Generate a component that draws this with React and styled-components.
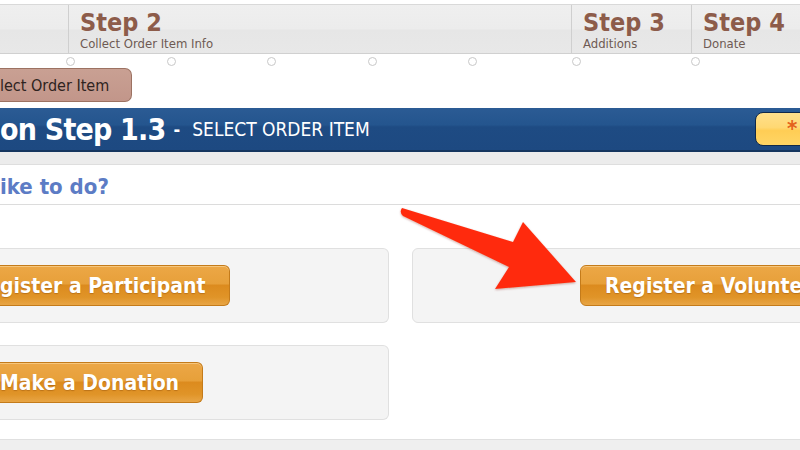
import React from 'react';
import styled, { createGlobalStyle } from 'styled-components';

const Global = createGlobalStyle`
  html, body {
    margin: 0;
    padding: 0;
    background: #fff;
  }
  body {
    font-family: "DejaVu Sans Condensed", "DejaVu Sans", sans-serif;
  }
`;

const Page = styled.div`
  position: relative;
  width: 800px;
  height: 450px;
  overflow: hidden;
  padding-top: 4px;
  box-sizing: border-box;
`;

const COLS = '68px 503px 120px 1fr';

const StepBar = styled.div`
  display: grid;
  grid-template-columns: ${COLS};
  height: 50px;
  box-sizing: border-box;
  border-top: 1px solid #d9d9d9;
  border-bottom: 1px solid #d0d0d0;
  background: linear-gradient(#efefef 0%, #ececec 50%, #e6e6e6 52%, #e8e8e8 100%);
`;

const StepCell = styled.div`
  border-left: ${(p) => (p.first ? 'none' : '1px solid #cfcfcf')};
  padding: 4px 0 0 11px;
`;

const StepTitle = styled.div`
  font-size: 25px;
  line-height: 28px;
  font-weight: bold;
  color: #8d5c4a;
`;

const StepSub = styled.div`
  font-size: 13px;
  line-height: 14px;
  color: #6e5a53;
`;

const DotRow = styled.div`
  display: grid;
  grid-template-columns: ${COLS};
  height: 14px;
  align-items: center;
`;

const DotGroup = styled.div`
  display: grid;
  grid-template-columns: repeat(${(p) => p.count}, 1fr);
`;

const Dot = styled.span`
  display: block;
  width: 9px;
  height: 9px;
  box-sizing: border-box;
  border: 1px solid #c8c8c8;
  border-radius: 50%;
  background: #fff;
  margin-left: ${(p) => p.offset || 0}px;
`;

const ActionRow = styled.div`
  display: flex;
  height: 36px;
`;

const BackButton = styled.div`
  display: flex;
  align-items: center;
  width: 132px;
  height: 34px;
  box-sizing: border-box;
  background: linear-gradient(#c9a093, #c2968a);
  border: 1px solid #9c7262;
  border-left: none;
  border-radius: 0 7px 7px 0;
  font-size: 16px;
  color: #2e2320;
`;

const BlueBar = styled.div`
  display: flex;
  align-items: center;
  height: 44px;
  margin-top: 4px;
  margin-right: -20px;
  box-sizing: border-box;
  background: linear-gradient(#2b5b94 0%, #24558e 40%, #1e4b83 45%, #1d4981 100%);
  border-bottom: 2px solid #15365f;
  color: #fff;
`;

const BarTitle = styled.span`
  font-size: 30px;
  font-weight: bold;
  letter-spacing: -0.8px;
`;

const BarDash = styled.span`
  font-size: 18px;
  font-weight: bold;
  margin: 0 12px 0 8px;
`;

const BarSub = styled.span`
  font-size: 19px;
`;

const NoteButton = styled.div`
  margin-left: auto;
  width: 65px;
  height: 34px;
  box-sizing: border-box;
  border: 1px solid #10294a;
  border-radius: 8px;
  background: linear-gradient(#ffe08c 0%, #ffd873 45%, #ffcd55 55%, #ffd565 100%);
  padding-left: 31px;
  font-size: 22px;
  font-weight: bold;
  line-height: 32px;
  color: #e4621c;
`;

const GrayStrip = styled.div`
  height: 12px;
  background: #ececec;
  border-bottom: 1px solid #dedede;
`;

const Question = styled.div`
  height: 40px;
  box-sizing: border-box;
  padding-top: 9px;
  border-bottom: 1px solid #dcdcdc;
  font-size: 22px;
  font-weight: bold;
  color: #5c7cc5;
`;

const Choices = styled.div`
  display: grid;
  grid-template-columns: 389px 1fr;
  column-gap: 23px;
  row-gap: 22px;
  margin-top: 43px;
  margin-right: -120px;
`;

const Card = styled.div`
  display: flex;
  align-items: center;
  height: 75px;
  box-sizing: border-box;
  background: #f4f4f4;
  border: 1px solid #e0e0e0;
  border-left: ${(p) => (p.cut ? 'none' : '1px solid #e0e0e0')};
  border-radius: ${(p) => (p.cut ? '0 6px 6px 0' : '6px')};
  padding-left: ${(p) => p.inset || 0}px;
`;

const OrangeButton = styled.div`
  display: flex;
  align-items: center;
  height: 41px;
  box-sizing: border-box;
  padding: 0 23px 0 ${(p) => (p.cut ? 0 : 24)}px;
  border: 1px solid #c47b1a;
  border-left: ${(p) => (p.cut ? 'none' : '1px solid #c47b1a')};
  border-radius: ${(p) => (p.cut ? '0 6px 6px 0' : '6px')};
  background: linear-gradient(#eca746 0%, #e7a03a 45%, #dc8b1e 50%, #e09428 80%, #e8a545 100%);
  box-shadow: inset 0 1px 0 rgba(255, 230, 180, 0.5);
  font-size: 21px;
  font-weight: bold;
  color: #fff;
  text-shadow: 0 1px 1px rgba(120, 60, 0, 0.35);
  white-space: nowrap;
`;

const Footer = styled.div`
  margin-top: 19px;
  height: 14px;
  background: #efefef;
  border-top: 1px solid #e0e0e0;
`;

const Arrow = styled.svg`
  position: absolute;
  left: 390px;
  top: 200px;
  width: 200px;
  height: 100px;
  overflow: visible;
`;

const steps = [
  { title: '', sub: '' },
  { title: 'Step 2', sub: 'Collect Order Item Info' },
  { title: 'Step 3', sub: 'Additions' },
  { title: 'Step 4', sub: 'Donate' },
];

const App = () => (
  <Page>
    <Global />
    <StepBar>
      {steps.map((s, i) => (
        <StepCell key={i} first={i === 0}>
          <StepTitle>{s.title}</StepTitle>
          <StepSub>{s.sub}</StepSub>
        </StepCell>
      ))}
    </StepBar>
    <DotRow>
      <div />
      <DotGroup count={5}>
        {[0, 1, 2, 3, 4].map((i) => (
          <Dot key={i} offset={-2} />
        ))}
      </DotGroup>
      <DotGroup count={1}>
        <Dot offset={1} />
      </DotGroup>
      <DotGroup count={1}>
        <Dot offset={0} />
      </DotGroup>
    </DotRow>
    <ActionRow>
      <BackButton>lect Order Item</BackButton>
    </ActionRow>
    <BlueBar>
      <BarTitle>on Step 1.3</BarTitle>
      <BarDash>-</BarDash>
      <BarSub>SELECT ORDER ITEM</BarSub>
      <NoteButton>*</NoteButton>
    </BlueBar>
    <GrayStrip />
    <Question>ike to do?</Question>
    <Choices>
      <Card cut>
        <OrangeButton cut>gister a Participant</OrangeButton>
      </Card>
      <Card inset={167}>
        <OrangeButton>Register a Volunteer</OrangeButton>
      </Card>
      <Card cut>
        <OrangeButton cut>Make a Donation</OrangeButton>
      </Card>
    </Choices>
    <Footer />
    <Arrow viewBox="390 200 200 100">
      <defs>
        <filter id="shade" x="-10%" y="-10%" width="120%" height="130%">
          <feDropShadow dx="0" dy="1" stdDeviation="1" floodColor="#7a1a00" floodOpacity="0.35" />
        </filter>
      </defs>
      <path
        d="M402 208 Q399 212 403 216 L509 267 L495 289 L576 282 L523 222 L513 242 Z"
        fill="#ff2c0e"
        filter="url(#shade)"
      />
    </Arrow>
  </Page>
);

export default App;
